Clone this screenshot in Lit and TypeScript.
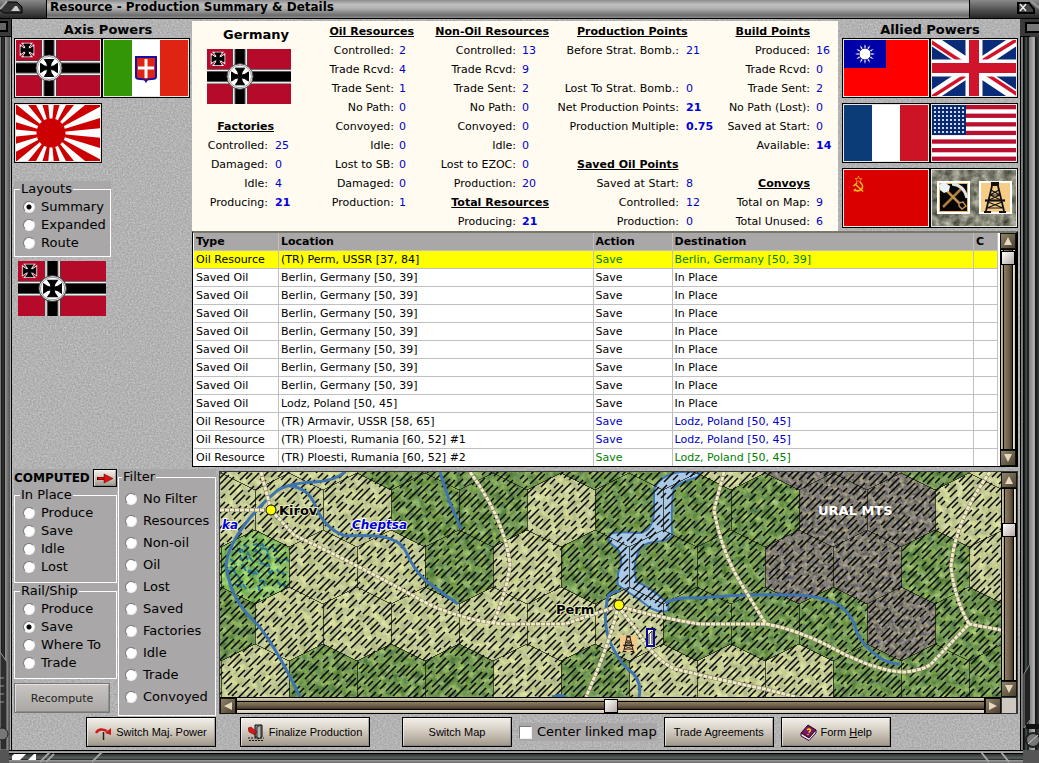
import { LitElement, html, svg, css } from "lit";
import { customElement, property } from "lit/decorators.js";
import { classMap } from "lit/directives/class-map.js";

/* ---------- shared helpers ---------- */

const crossPath = (cx: number, cy: number, r: number) => {
  const a = r * 0.55;
  const b = r * 0.16;
  return `M${cx - a} ${cy - r}Q${cx - b} ${cy - a} ${cx - b} ${cy - b}Q${cx - a} ${cy - b} ${cx - r} ${cy - a}
  V${cy + a}Q${cx - a} ${cy + b} ${cx - b} ${cy + b}Q${cx - b} ${cy + a} ${cx - a} ${cy + r}
  H${cx + a}Q${cx + b} ${cy + a} ${cx + b} ${cy + b}Q${cx + a} ${cy + b} ${cx + r} ${cy + a}
  V${cy - a}Q${cx + a} ${cy - b} ${cx + b} ${cy - b}Q${cx + b} ${cy - a} ${cx + a} ${cy - r}Z`;
};

const derrick = svg`
  <g fill="none" stroke="#111" stroke-width="1.2">
    <path d="M13 5L7 30M19 5L25 30" stroke-width="1.8"/>
    <path d="M12 9L21 14M20 9L11 14M11 14L22 19M21 14L10 19M9 21L24 27M23 21L8 27M11 14H21M8 27H24"/>
    <path d="M6 19.5H26" stroke-width="2.2"/>
  </g>
  <rect x="12" y="1" width="8" height="4" fill="#111"/><path d="M5 31H12M20 31H27" stroke="#111" stroke-width="2"/>`;

const germany = svg`
  <rect width="84" height="56" fill="#b60a2b"/>
  <path d="M33 0V56M0 28H84" stroke="#444" stroke-width="15.5"/>
  <path d="M33 0V56M0 28H84" stroke="#f3eeee" stroke-width="14"/>
  <path d="M33 0V56M0 28H84" stroke="#555" stroke-width="11"/>
  <path d="M33 0V56M0 28H84" stroke="#000" stroke-width="9"/>
  <circle cx="33" cy="28" r="13" fill="#fff" stroke="#444" stroke-width="1"/>
  <circle cx="33" cy="28" r="11.500" fill="none" stroke="#999" stroke-width="1"/>
  <path d=${crossPath(33, 28, 8.5)} fill="#000" stroke="#000"/>
  <path d=${crossPath(11, 10, 6)} fill="#000" stroke="#eee" stroke-width="2.6"/>
  <path d=${crossPath(11, 10, 6)} fill="#000" stroke="#000" stroke-width="1"/>`;

const italy = svg`
  <rect width="28" height="56" fill="#339606"/><rect x="28" width="28" height="56" fill="#fff"/>
  <rect x="56" width="28" height="56" fill="#e02413"/>
  <path d="M32 17H52V37Q52 39 48 39Q43 39 42 41Q41 39 36 39Q32 39 32 37Z" fill="#e02413" stroke="#1a0fa0" stroke-width="2"/>
  <path d="M42 19V38M34 28H50" stroke="#fff" stroke-width="3"/>`;

const sunRay = (i: number) => {
  const p = (d: number) => {
    const a = (d * Math.PI) / 180;
    return `${(35 + 80 * Math.cos(a)).toFixed(1)} ${(28 + 80 * Math.sin(a)).toFixed(1)}`;
  };
  return svg`<path d=${`M35 28L${p(i * 22.5 + 5.6)}L${p(i * 22.5 + 16.9)}Z`}/>`;
};
const japan = svg`<rect width="84" height="56" fill="#fff"/>
  <g fill="#cc0000">${Array.from({ length: 16 }, (_, i) => sunRay(i))}</g><circle cx="35" cy="28" r="14.5" fill="#cc0000"/>`;

const china = svg`<rect width="84" height="56" fill="#fe0000"/><rect width="42" height="28" fill="#0000a8"/>
  ${Array.from({ length: 12 }, (_, i) => svg`<path d="M18.6 14L21 4L23.4 14Z" fill="#fff" transform=${`rotate(${i * 30} 21 14)`}/>`)}
  <circle cx="21" cy="14" r="6" fill="#fff" stroke="#0000a8" stroke-width="1"/>`;

const britain = svg`<rect width="84" height="56" fill="#0a2b78"/>
  <path d="M0 0L84 56M84 0L0 56" stroke="#fff" stroke-width="11"/>
  <path d="M-2 1L42 30M86 -1L42 26M42 26L86 55M42 30L-2 58" stroke="#d0142c" stroke-width="3.5"/>
  <path d="M42 0V56M0 28H84" stroke="#fff" stroke-width="17"/>
  <path d="M42 0V56M0 28H84" stroke="#d0142c" stroke-width="10"/>`;

const france = svg`<rect width="28" height="56" fill="#0c3c78"/><rect x="28" width="28" height="56" fill="#fff"/>
  <rect x="56" width="28" height="56" fill="#cc1426"/>`;

const usa = svg`<rect width="84" height="56" fill="#fff"/>
  ${Array.from({ length: 7 }, (_, i) => svg`<rect y=${i * 8.6} width="84" height="4.3" fill="#b8102e"/>`)}
  <rect width="34" height="30" fill="#0a2a70"/>
  ${Array.from({ length: 56 }, (_, i) => svg`<rect x=${2 + (i % 8) * 4} y=${2 + Math.floor(i / 8) * 4} width="2" height="2" fill="#cfd8ee"/>`)}`;

const ussr = svg`<rect width="84" height="56" fill="#da0000"/>
  <path d="M14.5 6L15.4 8.6H18L16 10.2L16.7 12.6L14.5 11.2L12.3 12.6L13 10.2L11 8.6H13.6Z" fill="none" stroke="#f0a020" stroke-width=".8"/>
  <path d="M16 12Q21 17 16.500 20Q13 22 10 19.500M10 21L12 19M9.500 16L13 13M11.500 14.500L19 21.500" fill="none" stroke="#f5b81c" stroke-width="1.600"/>`;

const neutral = svg`
  <filter id="stone" x="0" y="0" width="1" height="1" color-interpolation-filters="sRGB">
    <feTurbulence type="fractalNoise" baseFrequency=".14" numOctaves="4" seed="4"/>
    <feColorMatrix values="0.7 0 0 0 0.16  0.7 0 0 0 0.16  0.65 0 0 0 0.13  0 0 0 0 1"/>
  </filter>
  <rect width="84" height="56" fill="#888" filter="url(#stone)"/>
  <rect x="5" y="11" width="33" height="33" fill="#fff"/><rect x="7" y="13" width="29" height="29" fill="#e8b45c"/>
  <rect x="8" y="14" width="27" height="27" fill="#050505"/>
  <path d="M11 37L30 18" stroke="#b07c3c" stroke-width="2.500"/>
  <path d="M20 14Q32 15 35 28" fill="none" stroke="#dfe3e6" stroke-width="3"/>
  <path d="M14 20L27 33" stroke="#c09050" stroke-width="2.500"/>
  <path d="M7 15L12 12L18 16L17 21L12 23L8 20Z" fill="#eef1f3"/>
  <path d="M27 33L31 32L34 36L30 39L27 36Z" fill="none" stroke="#c09050" stroke-width="1.500"/>
  <rect x="47" y="11" width="33" height="33" fill="#fff"/><rect x="49" y="13" width="29" height="29" fill="#f5cd86"/>
  <g transform="translate(47 11)">${derrick}</g>`;

const flags: Record<string, unknown> = { germany, italy, japan, china, britain, france, usa, ussr, neutral };

const noise = (offset: string) =>
  `url("data:image/svg+xml,%3Csvg xmlns='http://www.w3.org/2000/svg' width='160' height='160'%3E%3Cfilter id='n' x='0' y='0' width='1' height='1' color-interpolation-filters='sRGB'%3E%3CfeTurbulence type='fractalNoise' baseFrequency='.6' numOctaves='2' stitchTiles='stitch'/%3E%3CfeColorMatrix values='.24 0 0 0 ${offset} .24 0 0 0 ${offset} .24 0 0 0 ${offset} 0 0 0 0 1'/%3E%3C/filter%3E%3Crect width='160' height='160' filter='url(%23n)'/%3E%3C/svg%3E")`;

@customElement("nation-flag")
class NationFlag extends LitElement {
  @property() name = "germany";
  static styles = css`
    :host { display: block; }
    svg { display: block; width: 100%; height: 100%; }
  `;
  render() {
    return html`<svg viewBox="0 0 84 56" preserveAspectRatio="none" role="img" aria-label=${this.name}>${flags[this.name]}</svg>`;
  }
}

@customElement("metal-scroll")
class MetalScroll extends LitElement {
  @property() axis = "vertical";
  @property({ type: Number }) position = 0;
  static styles = css`
    :host { display: flex; background: #000; box-sizing: border-box; }
    :host([axis="vertical"]) { flex-direction: column; width: 16px; }
    :host([axis="horizontal"]) { flex-direction: row; height: 16px; }
    button {
      width: 16px; height: 16px; padding: 0; flex: none; border: 1px solid #111;
      background: linear-gradient(135deg, #8f836b, #4c412f); display: grid; place-items: center;
    }
    .arrow { width: 8px; height: 8px; display: block; fill: #e4d8bd; }
    .track { flex: 1; display: flex; box-sizing: border-box; }
    .vertical { flex-direction: column; margin: 1px 0;
      background: linear-gradient(to right, #000 1px, #d8cfb8 1px, #a59a80 3px, #000 3px, #000 4px, #8d7d63 4px, #6b5c45 9px, #3e3425 12px, #000 12px, #000 13px, #efe8d8 13px, #c9c0ac 15px, #000 15px); }
    .horizontal { margin: 0 1px;
      background: linear-gradient(to bottom, #d8cfb8 1px, #a59a80 3px, #000 3px, #000 4px, #8d7d63 4px, #6b5c45 8px, #3e3425 11px, #000 11px, #000 12px, #efe8d8 12px, #c9c0ac 15px, #000 15px); }
    .thumb { flex: none; width: 14px; height: 14px; margin: 1px; box-sizing: border-box; border: 1px solid #000;
      background: linear-gradient(135deg, #fff, #b5aaa4); }
  `;
  render() {
    const v = this.axis === "vertical";
    return html`
      <button aria-label=${v ? "Scroll up" : "Scroll left"}>
        <svg class="arrow" viewBox="0 0 8 8"><path d=${v ? "M4 0L8 8H0Z" : "M0 4L8 0V8Z"}/></svg>
      </button>
      <div class="track ${v ? "vertical" : "horizontal"}" role="scrollbar" aria-controls="view"
        aria-orientation=${this.axis} aria-valuenow=${this.position}>
        <span style=${`flex:${this.position} 1 0`}></span>
        <span class="thumb"></span>
        <span style=${`flex:${100 - this.position} 1 0`}></span>
      </div>
      <button aria-label=${v ? "Scroll down" : "Scroll right"}>
        <svg class="arrow" viewBox="0 0 8 8"><path d=${v ? "M4 8L8 0H0Z" : "M8 4L0 0V8Z"}/></svg>
      </button>`;
  }
}

/* ---------- campaign map ---------- */

/* One letter per hex: c clear, f forest, m mountain, s swamp. */
const terrain: { y: number; x0: number; hexes: string }[] = [
  { y: 453, x0: 255, hexes: "ccfffffcmmfc" },
  { y: 510, x0: 221, hexes: "cccffcfffmmc" },
  { y: 567, x0: 255, hexes: "sccfcfffmmfc" },
  { y: 624, x0: 221, hexes: "fccccccfffmf" },
  { y: 681, x0: 255, hexes: "cfffcfcccfff" },
];

const hexPath = (x: number, y: number) =>
  `M${x} ${y - 37}L${x + 34} ${y - 20}V${y + 20}L${x} ${y + 37}L${x - 34} ${y + 20}V${y - 20}Z`;

const hexesOf = (kind: string) =>
  terrain
    .map((row) => [...row.hexes].map((k, i) => (k === kind ? hexPath(row.x0 + i * 68, row.y) : "")).join(""))
    .join("");

const random = (seed: number) => () => {
  seed = (seed * 1664525 + 1013904223) % 4294967296;
  return seed / 4294967296;
};

const hatching = (() => {
  const r = random(7);
  let d = "";
  for (let c = 690; c < 1720; c += 7) {
    let x = c - 700 + r() * 10;
    while (x < c - 468) {
      const len = 4 + r() * 9;
      if (x > 210 && x < 1004) {
        const off = Math.round(r() * 2);
        const a = Math.round(x);
        const b = Math.round(x + len);
        d += `M${a} ${c - a + off}L${b} ${c - b + off}`;
      }
      x += len + 3 + r() * 3;
    }
  }
  return d;
})();

const marsh = (() => {
  const r = random(21);
  let d = "";
  for (let i = 0; i < 48; i++) {
    const x = Math.round(228 + r() * 54);
    const y = Math.round(540 + r() * 52);
    d += `M${x} ${y}l${Math.round(r() * 6)} ${Math.round(r() * 5 - 2)}l2 3`;
  }
  return d;
})();

const roads =
  "M261 472L271 510L294 535Q360 566 430 605Q480 626 520 624H565L618 606M220 510H271M470 472Q505 520 510 565Q507 590 493 624" +
  "M618 606Q660 618 700 624H766Q800 630 840 652Q880 672 905 672Q925 670 932 663L969 624L1001 630M618 606Q611 640 586 697" +
  "M618 606L640 635Q655 660 675 669Q720 680 765 689L796 697M724 472L714 510Q722 555 745 590L766 624M990 472Q955 520 951 567Q955 600 969 624";

@customElement("hex-map")
class HexMap extends LitElement {
  static styles = css`
    :host { display: block; min-width: 0; }
    .map { display: block; width: 100%; height: 225px; background: #9db56c; }
    .clear { fill: #c6cd94; }
    .forest { fill: #769c54; }
    .mountain { fill: #858076; }
    .swamp { fill: #86bd62; }
    .grid { fill: none; stroke: #1c1f12; stroke-width: 1; shape-rendering: crispEdges; opacity: .75; }
    .hatch { fill: none; stroke: #060603; stroke-width: 1.5; }
    .river { fill: none; stroke: #3f74ae; stroke-width: 3; stroke-linejoin: round; }
    .lake { fill: #a9c9e4; stroke: #3f78b0; stroke-width: 2; stroke-linejoin: round; }
    .marsh { fill: none; stroke: #2d7a94; stroke-width: 2; }
    .road { fill: none; stroke: #8a8770; stroke-width: 4; }
    .ties { fill: none; stroke: #f1ebc4; stroke-width: 3; stroke-dasharray: 4 1; }
    .town { fill: #ffff00; stroke: #000; stroke-width: 1; }
    text { font: bold 13px "DejaVu Sans", sans-serif; }
    .place { fill: #000; paint-order: stroke; stroke: #e4e6bd; stroke-width: 2px; }
    .water { fill: #0000d0; font-size: 12px; font-style: italic; paint-order: stroke; stroke: #fff; stroke-width: 2px; }
    .range { fill: #fff; }
  `;
  render() {
    const rough = (id: string, freq: number, seed: number, k: number) => svg`
      <filter id=${id} x="0" y="0" width="1" height="1" color-interpolation-filters="sRGB">
        <feTurbulence type="fractalNoise" baseFrequency=${freq} numOctaves="3" seed=${seed}/>
        <feColorMatrix values="1 0 0 0 0  .9 .1 0 0 0  .6 0 .4 0 0  0 0 0 0 1"/>
        <feComposite in2="SourceGraphic" operator="arithmetic" k1="0" k2=${k} k3="1" k4=${-k / 2} result="mix"/>
        <feComposite in="mix" in2="SourceGraphic" operator="in"/>
      </filter>`;
    return html`<svg class="map" viewBox="220 472 781 225" preserveAspectRatio="xMinYMin slice" role="img" aria-label="Map around Perm">
      <defs>${rough("rc", 0.14, 3, 0.35)}${rough("rf", 0.14, 8, 0.55)}${rough("rm", 0.25, 5, 0.6)}</defs>
      <path class="clear" d=${hexesOf("c")} filter="url(#rc)"/>
      <path class="forest" d=${hexesOf("f")} filter="url(#rf)"/>
      <path class="mountain" d=${hexesOf("m")} filter="url(#rm)"/>
      <path class="swamp" d=${hexesOf("s")} filter="url(#rf)"/>
      <path class="marsh" d=${marsh}/>
      <path class="lake" d="M700 472L698 477Q680 482 674 488Q671 500 672 535Q668 541 655 542Q640 543 637 556Q632 570 637 582Q650 587 664 600Q671 606 667 611Q660 613 650 608L640 600Q625 590 618 585Q616 575 621 565Q622 550 614 546Q606 541 610 534Q615 531 640 533Q654 530 654 510V490Q658 476 680 472Z"/>
      <path class="grid" d=${["c", "f", "m", "s"].map(hexesOf).join("")}/>
      <path class="hatch" d=${hatching}/>
      <path class="river" d="M345 472Q335 481 315 482Q290 483 278 490Q263 502 249 519Q228 545 226 565Q230 600 257 624Q275 645 300 697"/>
      <path class="river" d="M290 486Q308 488 315 505Q325 530 346 536Q360 535 376 536Q398 538 405 550Q414 570 425 580Q445 595 458 604M440 472L449 500L461 529"/>
      <path class="river" d="M666 603Q675 597 700 598Q740 594 790 595Q820 594 840 606Q853 615 857 633Q862 645 880 658Q890 664 900 664"/>
      <path class="river" d="M620 591Q606 592 607 602Q603 620 609 640Q618 660 628 669Q643 680 639 697M552 697Q560 694 566 697"/>
      <path class="road" d=${roads}/>
      <path class="ties" d=${roads}/>
      <circle class="town" cx="271" cy="510" r="5"/>
      <circle class="town" cx="619" cy="605" r="5"/>
      <rect x="620" y="635" width="17" height="17" fill="#f3c98a"/>
      <g transform="translate(620 635) scale(.53)">${derrick}</g>
      <rect x="647" y="629" width="7" height="17" fill="#fff" stroke="#0a0a90" stroke-width="2"/>
      <path d="M649 644V634L652 631V644" fill="none" stroke="#111"/>
      <text class="place" x="279" y="515">Kirov</text>
      <text class="place" x="556" y="614">Perm</text>
      <text class="water" x="352" y="529">Cheptsa</text>
      <text class="water" x="222" y="529">ka</text>
      <text class="range" x="818" y="515">URAL MTS</text>
    </svg>`;
  }
}

/* ---------- data ---------- */

type Line = [label: string, value: string, strong?: boolean] | { head: string } | null;

const blocks: { cls: string; lines: Line[] }[] = [
  { cls: "oil", lines: [{ head: "Oil Resources" }, ["Controlled:", "2"], ["Trade Rcvd:", "4"], ["Trade Sent:", "1"], ["No Path:", "0"],
    ["Convoyed:", "0"], ["Idle:", "0"], ["Lost to SB:", "0"], ["Damaged:", "0"], ["Production:", "1"]] },
  { cls: "nonoil", lines: [{ head: "Non-Oil Resources" }, ["Controlled:", "13"], ["Trade Rcvd:", "9"], ["Trade Sent:", "2"], ["No Path:", "0"],
    ["Convoyed:", "0"], ["Idle:", "0"], ["Lost to EZOC:", "0"], ["Production:", "20"], { head: "Total Resources" }, ["Producing:", "21", true]] },
  { cls: "points", lines: [{ head: "Production Points" }, ["Before Strat. Bomb.:", "21"], null, ["Lost To Strat. Bomb.:", "0"],
    ["Net Production Points:", "21", true], ["Production Multiple:", "0.75", true], null, { head: "Saved Oil Points" },
    ["Saved at Start:", "8"], ["Controlled:", "12"], ["Production:", "0"]] },
  { cls: "build", lines: [{ head: "Build Points" }, ["Produced:", "16"], ["Trade Rcvd:", "0"], ["Trade Sent:", "2"], ["No Path (Lost):", "0"],
    ["Saved at Start:", "0"], ["Available:", "14", true], null, { head: "Convoys" }, ["Total on Map:", "9"], ["Total Unused:", "6"]] },
];
const factories: Line[] = [{ head: "Factories" }, ["Controlled:", "25"], ["Damaged:", "0"], ["Idle:", "4"], ["Producing:", "21", true]];

const berlin = ["Saved Oil", "Berlin, Germany [50, 39]", "In Place", ""];
const rows: string[][] = [
  ["Oil Resource", "(TR) Perm, USSR [37, 84]", "Berlin, Germany [50, 39]", "green"],
  berlin, berlin, berlin, berlin, berlin, berlin, berlin,
  ["Saved Oil", "Lodz, Poland [50, 45]", "In Place", ""],
  ["Oil Resource", "(TR) Armavir, USSR [58, 65]", "Lodz, Poland [50, 45]", "blue"],
  ["Oil Resource", "(TR) Ploesti, Rumania [60, 52] #1", "Lodz, Poland [50, 45]", "blue"],
  ["Oil Resource", "(TR) Ploesti, Rumania [60, 52] #2", "Lodz, Poland [50, 45]", "green"],
];

@customElement("app-root")
class AppRoot extends LitElement {
  static styles = [
    css`
    :host { display: block; font: 11px/18px "DejaVu Sans", Verdana, sans-serif; color: #000; }
    * { box-sizing: border-box; }
    .window { display: grid; min-height: 100vh; background: #333;
      grid-template: "title title title" 19px "left main right" 1fr "foot foot foot" 13px / 12px minmax(0, 1fr) 19px; }

    .title { grid-area: title; display: flex; border-bottom: 1px solid #000;
      background: linear-gradient(#8c8c8c, #bdbdbd 25%, #b4b4b4 45%, #6c6c6c 85%, #8a8a8a); }
    .cap { display: flex; width: 47px; flex: none; border-right: 1px solid #000; background: linear-gradient(#8a8a8a, #4c4c4c 60%, #262626); }
    .cap.end { width: 70px; border-right: 0; border-left: 1px solid #000; justify-content: flex-end; }
    .cap svg { display: block; width: 30px; height: 18px; }
    .title h1 { flex: 1; margin: 0; padding-left: 3px; font-size: 12px; line-height: 15px; font-weight: bold; white-space: nowrap; }

    .side { display: flex; flex-direction: column; }
    .side svg { display: block; width: 100%; height: 18px; flex: none; }
    .side.l { grid-area: left; background: linear-gradient(to right, #777 1px, #1a1a1a 1px, #333 4px, #000 5px, #999 5px, #777 7px, #555 10px, #aaa 10px, #aaa 11px, #000 11px); }
    .side.r { grid-area: right; background: linear-gradient(to right, #000 1px, #8a8a8a 1px, #6c6c6c 3px, #000 3px, #222 5px, #4d6155 6px, #111 8px, #333 9px, #777 9px, #b4b4b4 14px, #9a9a9a 15px, #111 15px, #3a3a3a 19px); }
    .side .foot-piece { margin-top: auto; height: 100px; }
    .bottom { grid-area: foot; display: flex;
      background: linear-gradient(#000 1px, #8c8c8c 1px, #b0b0b0 3px, #000 3px, #000 4px, #2b2f2d 4px, #596060 8px, #222 10px, #9a9a9a 10px, #6a6a6a 13px); }
    .bottom svg { display: block; height: 13px; width: 110px; }
    .bottom svg:last-child { margin-left: auto; width: 60px; }

    .main { grid-area: main; padding: 2px; display: flex; flex-direction: column; gap: 2px; }
    .top { display: grid; grid-template: "axis info allied" auto "axis list list" auto / 178px minmax(0, 1fr) 180px; }
    h2 { margin: 0; font-size: 13px; line-height: 17px; text-align: center; }

    .powers { display: grid; grid-template-columns: 88px 88px; row-gap: 5px; align-content: start; }
    .axis { grid-area: axis; }
    .allied { grid-area: allied; padding-left: 4px; }
    .powers h2 { grid-column: 1 / -1; margin-bottom: -5px; }
    .axis h2 { padding-left: 12px; }
    .power { padding: 1px; height: 60px; border: 1px solid #000; background: #e8e8e0; cursor: pointer; }
    .power nation-flag { height: 56px; width: 84px; }
    .layouts { margin-top: 13px; grid-column: 1 / -1; width: 97px; }
    .chosen { width: 88px; height: 55px; margin: -1px 0 0 4px; }

    .info { grid-area: info; display: flex; background: #fffbf0; padding-top: 1px; }
    .block { display: grid; grid-auto-rows: 19px; line-height: 20px; align-content: start; white-space: nowrap; margin: 0; }
    .block dt { text-align: right; margin: 0; }
    .block dd { margin: 0; color: #0000c8; }
    .block h3 { grid-column: 1 / -1; margin: 0; font-size: 11px; line-height: 20px; text-align: right; text-decoration: underline; }
    .block .strong { font-weight: bold; color: #0000e0; }
    .gap { grid-column: 1 / -1; }
    .nation { flex: 112 1 0; display: flex; flex-direction: column; }
    .nation h2 { height: 27px; line-height: 25px; padding-left: 16px; }
    .nation nation-flag { width: 84px; height: 55px; margin: 0 0 13px 15px; }
    .factories { grid-template-columns: 1fr 36px; }
    .factories h3 { padding-right: 30px; }
    .factories dd { padding-left: 7px; }
    .oil { flex: 116 1 0; grid-template-columns: 1fr 26px; }
    .oil h3 { padding-right: 6px; }
    .oil dd { padding-left: 5px; }
    .nonoil { flex: 132 1 0; grid-template-columns: 1fr 36px; }
    .nonoil h3 { padding-right: 3px; }
    .nonoil dd { padding-left: 6px; }
    .points { flex: 163 1 0; grid-template-columns: 1fr 36px; }
    .points h3 { text-align: left; padding-left: 25px; }
    .points dd { padding-left: 7px; }
    .build { flex: 123 1 0; grid-template-columns: 1fr 28px; }
    .build h3 { padding-right: 28px; }
    .build dd { padding-left: 6px; }

    .list { grid-area: list; display: flex; gap: 2px; height: 236px; overflow: hidden; background: #fff;
      border: solid #000; border-width: 1px 2px 1px 1px; border-top: 2px solid #77776c; }
    .rows { flex: 1; min-width: 0; padding-left: 1px; }
    .list metal-scroll { flex: none; }
    table { width: 100%; table-layout: fixed; border-spacing: 0; }
    th, td { height: 18px; padding: 0 2px; line-height: 17px; text-align: left; white-space: nowrap; overflow: hidden;
      border: solid #c0c0c0; border-width: 0 1px 1px 0; }
    th { background: #a9a7a7; }
    .c1 { width: 85px; } .c3 { width: 79px; } .c4 { width: 37.5%; } .c5 { width: 24px; }
    .picked td { background: #ffff00; }
    .green { color: #008000; }
    .blue { color: #0000c8; }

    .lower { display: grid; grid-template-columns: 103px 98px minmax(0, 1fr); column-gap: 1px; font-size: 13px; }
    .panel { background: #a9a7a7; }
    fieldset { margin: 0; padding: 1px 0 0 6px; min-width: 0; border: 1px solid #fff; height: 100%; }
    legend { padding: 0 1px; margin-left: -1px; line-height: 16px; font-size: 13px; }
    .radio { display: flex; align-items: center; gap: 6px; height: 18px; font-size: 13px; white-space: nowrap; }
    .radio input { appearance: none; width: 12px; height: 12px; margin: 0 0 0 2px; border-radius: 50%; background: #fff;
      border: 1px solid; border-color: #777 #eee #eee #777; flex: none; }
    .radio input:checked { background: radial-gradient(circle, #000 2px, #fff 3px); }
    .group { height: 96px; }
    .layouts .group { height: 76px; }
    .filter { height: 247px; }
    .filter fieldset { padding: 3px 0 0 4px; }
    .filter .radio { height: 22px; }
    .computed { display: flex; justify-content: space-between; align-items: center; height: 18px; font-size: 12px; font-weight: bold; background: #a9a7a7; }
    button { font-family: "Liberation Sans", Arial, sans-serif; }
    .btn { display: inline-flex; align-items: center; justify-content: center; gap: 4px; height: 30px; padding: 0; color: #000;
      font-size: 11px; border: 1px solid #000; white-space: nowrap;
      background: linear-gradient(#f3efe9, #dcd5cb 35%, #b9b0a4 75%, #9d9588); box-shadow: inset 1px 1px #fff8, inset -1px -1px #7778; }
    .btn.go { height: 18px; width: 24px; }
    .btn.flat { width: 96px; margin-top: 4px; font-family: "DejaVu Sans", sans-serif; color: #222; border-color: #777;
      background: linear-gradient(#c9c5c2, #aaa6a3); }
    .btn svg { display: block; width: 17px; height: 17px; flex: none; }

    .mapbox { display: grid; grid-template: "map v" 225px "h corner" 17px / minmax(0, 1fr) 16px; align-self: start;
      margin: 2px 0 0 2px; border: solid #3a3a38; border-width: 1px 1px 0 1px; }
    .mapbox hex-map { overflow: hidden; }
    .mapbox metal-scroll[axis="horizontal"] { border-top: 1px solid #000; height: 17px; }
    .corner { border: 1px solid #333; background: #cfc8c0; }

    .actions { display: flex; align-items: center; padding-left: 72px; margin-top: -1px; gap: 7px; }
    .w130 { width: 130px; } .w110 { width: 110px; }
    .finalize { margin-left: 17px; } .switch { margin-left: 25px; }
    .check { display: flex; align-items: center; gap: 5px; font-size: 13px; background: #a9a7a7; }
    .check input { appearance: none; margin: 0; width: 13px; height: 13px; background: #fff; border: 1px solid; border-color: #777 #eee #eee #777; }
    `,
  ];

  firstUpdated() {
    const tile = new CSSStyleSheet();
    tile.replaceSync(`.main { background: #b2b2b2 ${noise(".58")}; }`);
    const root = this.renderRoot as ShadowRoot;
    root.adoptedStyleSheets = [...root.adoptedStyleSheets, tile];
  }

  private lines(lines: Line[]) {
    return lines.map((l) =>
      l === null
        ? html`<div class="gap"></div>`
        : Array.isArray(l)
          ? html`<dt>${l[0]}</dt><dd class=${classMap({ strong: !!l[2] })}>${l[1]}</dd>`
          : html`<h3>${l.head}</h3>`,
    );
  }

  private radios(legend: string, name: string, items: string[], checked = "", cls = "group") {
    return html`<div class="panel ${cls}"><fieldset><legend>${legend}</legend>
      ${items.map((t) => html`<label class="radio"><input type="radio" name=${name} .checked=${t === checked} />${t}</label>`)}
    </fieldset></div>`;
  }

  private power(name: string) {
    return html`<button class="power"><nation-flag name=${name}></nation-flag></button>`;
  }

  render() {
    return html`
      <div class="window">
        <header class="title">
          <div class="cap"><svg viewBox="0 0 30 18"><path d="M0 10Q3 2 8 2H17L22 7V13H4Z" fill="#333" stroke="#000"/><path d="M11 11L15 6H17L20 11Z" fill="#ccc"/><path d="M0 9L7 1" stroke="#aaa" stroke-width="2"/></svg></div>
          <h1>Resource - Production Summary &amp; Details</h1>
          <div class="cap end"><svg viewBox="0 0 30 18"><path d="M9 3H20L25 9V13H9Z" fill="#444" stroke="#000" stroke-width="2"/><path d="M11 4L17 11M17 4L11 11" stroke="#eee" stroke-width="1.500"/><path d="M22 1Q27 5 30 8" stroke="#999" fill="none" stroke-width="2"/></svg></div>
        </header>
        <div class="side l">
          <svg viewBox="0 0 12 18" preserveAspectRatio="none"><rect width="12" height="18" fill="#3a3a3a"/><rect x="-3" y="3" width="10" height="9" fill="#666" stroke="#000" stroke-width="2"/><path d="M0 17.500H12M11.500 0V18" stroke="#000"/></svg>
          <svg class="foot-piece" viewBox="0 0 12 100" preserveAspectRatio="none"><path d="M0 2L7 12V100H0Z" fill="#2e2e2e" stroke="#999"/><path d="M0 28H4M0 36H4M0 44H4M0 52H4" stroke="#999"/><circle cx="2" cy="84" r="6" fill="#777" stroke="#222"/></svg>
        </div>
        <main class="main">
          <div class="top">
            <section class="powers axis">
              <h2>Axis Powers</h2>
              ${["germany", "italy", "japan"].map((n) => this.power(n))}
              <div class="layouts">${this.radios("Layouts", "layout", ["Summary", "Expanded", "Route"], "Summary")}</div>
              <nation-flag class="chosen" name="germany"></nation-flag>
            </section>
            <section class="info">
              <div class="nation">
                <h2>Germany</h2>
                <nation-flag name="germany"></nation-flag>
                <dl class="block factories">${this.lines(factories)}</dl>
              </div>
              ${blocks.map((b) => html`<dl class="block ${b.cls}">${this.lines(b.lines)}</dl>`)}
            </section>
            <section class="powers allied">
              <h2>Allied Powers</h2>
              ${["china", "britain", "france", "usa", "ussr", "neutral"].map((n) => this.power(n))}
            </section>
            <section class="list">
              <div class="rows">
                <table>
                  <thead><tr><th class="c1">Type</th><th>Location</th><th class="c3">Action</th><th class="c4">Destination</th><th class="c5">C</th></tr></thead>
                  <tbody>
                    ${rows.map(([type, place, dest, tone], i) => html`<tr class=${classMap({ picked: i === 0 })}>
                      <td>${type}</td><td>${place}</td><td class=${tone}>Save</td><td class=${tone}>${dest}</td><td></td></tr>`)}
                  </tbody>
                </table>
              </div>
              <metal-scroll axis="vertical" position="0"></metal-scroll>
            </section>
          </div>

          <div class="lower">
            <div>
              <div class="computed"><span>COMPUTED</span>
                <button class="btn go" aria-label="Apply computed"><svg viewBox="0 0 17 17"><path d="M0 8.500H10" stroke="#400" stroke-width="3"/><path d="M1 8.500H10" stroke="#e01010" stroke-width="2"/><path d="M7 4L16 8.500L7 13Z" fill="#e01010" stroke="#400" stroke-width=".5"/></svg></button>
              </div>
              ${this.radios("In Place", "inplace", ["Produce", "Save", "Idle", "Lost"])}
              ${this.radios("Rail/Ship", "rail", ["Produce", "Save", "Where To", "Trade"], "Save")}
              <button class="btn flat">Recompute</button>
            </div>
            ${this.radios("Filter", "filter", ["No Filter", "Resources", "Non-oil", "Oil", "Lost", "Saved", "Factories", "Idle", "Trade", "Convoyed"], "", "filter")}
            <div class="mapbox">
              <hex-map></hex-map>
              <metal-scroll axis="vertical" position="19"></metal-scroll>
              <metal-scroll axis="horizontal" position="50"></metal-scroll>
              <div class="corner"></div>
            </div>
          </div>

          <div class="actions">
            <button class="btn w130"><svg viewBox="0 0 17 17"><path d="M1 9Q4 3 12 7" fill="none" stroke="#d01818" stroke-width="2.500"/><path d="M10 9L16 4V11Z" fill="#d01818"/><path d="M8.500 8V16" stroke="#222" stroke-width="1.500"/></svg>Switch Maj. Power</button>
            <button class="btn w130 finalize"><svg viewBox="0 0 17 17"><path d="M7 1H14V13H7Z" fill="#8a8a8a" stroke="#111"/><path d="M9 3L13 1V14L9 15Z" fill="#b5b5b5" stroke="#333"/><path d="M0 4L3 3L9 8L7 9V11L1 8Z" fill="#d81818" stroke="#600" stroke-width=".5"/><path d="M0 14H16M1 16.500H15" stroke="#111" stroke-dasharray="2 1"/></svg>Finalize Production</button>
            <button class="btn w110 switch">Switch Map</button>
            <label class="check"><input type="checkbox" />Center linked map</label>
            <button class="btn w110">Trade Agreements</button>
            <button class="btn w110"><svg viewBox="0 0 17 17"><path d="M1 9L8 1L16 6L9 14Z" fill="#7c1468" stroke="#2a0524"/><path d="M1 9V12L9 16.500L16 9V6L9 14Z" fill="#f2eefa" stroke="#2a0524"/><path d="M7 6Q9 4 10.500 6Q10 8 8.500 8.500M8 10V11" stroke="#ffd800" fill="none" stroke-width="1.400"/></svg><span>Form <u>H</u>elp</span></button>
          </div>
        </main>
        <div class="side r">
          <svg viewBox="0 0 19 18" preserveAspectRatio="none"><rect width="19" height="18" fill="#3a3a3a"/><rect x="6" y="4" width="14" height="9" fill="#777" stroke="#000" stroke-width="2"/><path d="M0 17.500H10" stroke="#000"/></svg>
          <svg class="foot-piece" viewBox="0 0 19 100" preserveAspectRatio="none"><path d="M10 70L4 78V24L10 14" fill="#222" stroke="#888"/><rect x="6" y="74" width="13" height="5" fill="#111"/><circle cx="13" cy="90" r="7" fill="#777" stroke="#222" stroke-width="2"/><path d="M8 94L18 85" stroke="#ccc"/></svg>
        </div>
        <div class="bottom">
          <svg viewBox="0 0 110 13"><rect width="9" height="13" fill="#555"/><path d="M14 4H26L20 10H12V6Z" fill="#fff"/><path d="M34 4H36V10H28Z" fill="#fff"/><path d="M40 12L50 2M46 12L54 4M92 12L102 2" stroke="#a0a0a0" stroke-width="2"/></svg>
          <svg viewBox="0 0 60 13"><path d="M2 2L10 12M22 2L30 12" stroke="#a8a8a8" stroke-width="2"/><rect x="44" width="16" height="13" fill="#555"/></svg>
        </div>
      </div>`;
  }
}
